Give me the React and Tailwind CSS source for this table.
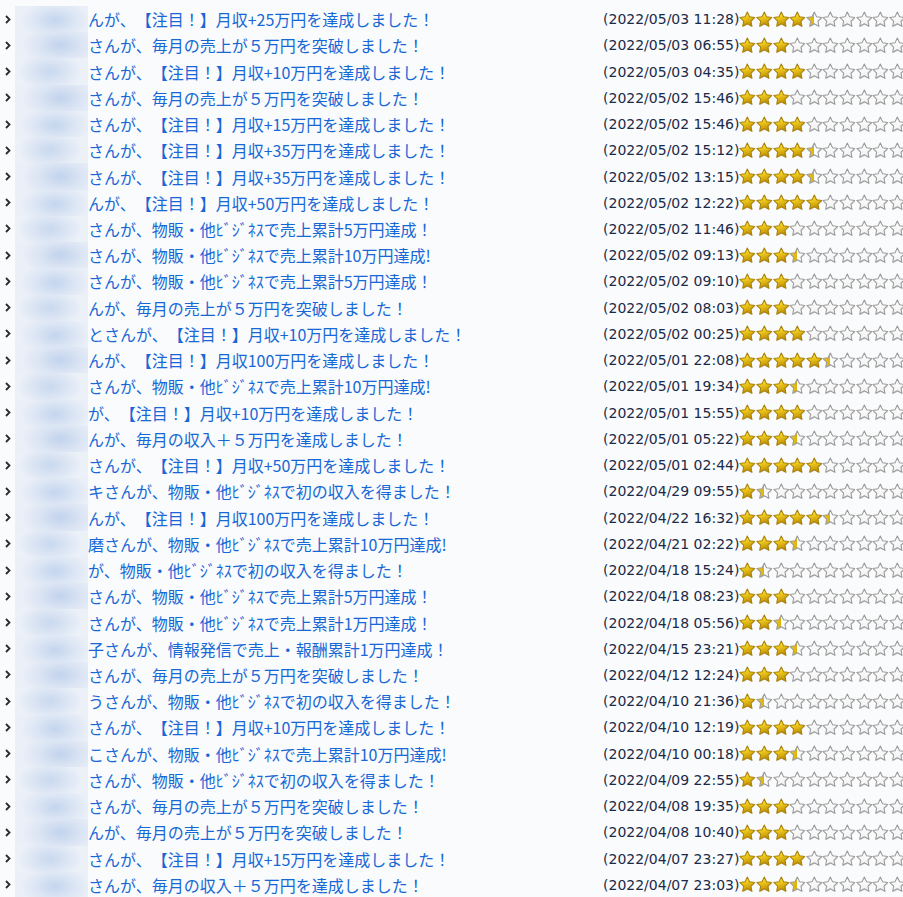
import React from 'react';

const rows = [
  ['a', 'んが、【注目！】月収+25万円を達成しました！', '2022/05/03 11:28', 4.5],
  ['b', 'さんが、毎月の売上が５万円を突破しました！', '2022/05/03 06:55', 3],
  ['c', 'さんが、【注目！】月収+10万円を達成しました！', '2022/05/03 04:35', 4],
  ['b', 'さんが、毎月の売上が５万円を突破しました！', '2022/05/02 15:46', 3],
  ['a', 'さんが、【注目！】月収+15万円を達成しました！', '2022/05/02 15:46', 4],
  ['c', 'さんが、【注目！】月収+35万円を達成しました！', '2022/05/02 15:12', 4.5],
  ['b', 'さんが、【注目！】月収+35万円を達成しました！', '2022/05/02 13:15', 4.5],
  ['a', 'んが、【注目！】月収+50万円を達成しました！', '2022/05/02 12:22', 5],
  ['c', 'さんが、物販・他ﾋﾞｼﾞﾈｽで売上累計5万円達成！', '2022/05/02 11:46', 3],
  ['b', 'さんが、物販・他ﾋﾞｼﾞﾈｽで売上累計10万円達成!', '2022/05/02 09:13', 3.5],
  ['a', 'さんが、物販・他ﾋﾞｼﾞﾈｽで売上累計5万円達成！', '2022/05/02 09:10', 3],
  ['c', 'んが、毎月の売上が５万円を突破しました！', '2022/05/02 08:03', 3],
  ['a', 'とさんが、【注目！】月収+10万円を達成しました！', '2022/05/02 00:25', 4],
  ['b', 'んが、【注目！】月収100万円を達成しました！', '2022/05/01 22:08', 5.5],
  ['c', 'さんが、物販・他ﾋﾞｼﾞﾈｽで売上累計10万円達成!', '2022/05/01 19:34', 3.5],
  ['a', 'が、【注目！】月収+10万円を達成しました！', '2022/05/01 15:55', 4],
  ['b', 'んが、毎月の収入＋５万円を達成しました！', '2022/05/01 05:22', 3.5],
  ['c', 'さんが、【注目！】月収+50万円を達成しました！', '2022/05/01 02:44', 5],
  ['a', 'キさんが、物販・他ﾋﾞｼﾞﾈｽで初の収入を得ました！', '2022/04/29 09:55', 1.5],
  ['b', 'んが、【注目！】月収100万円を達成しました！', '2022/04/22 16:32', 5.5],
  ['c', '磨さんが、物販・他ﾋﾞｼﾞﾈｽで売上累計10万円達成!', '2022/04/21 02:22', 3.5],
  ['a', 'が、物販・他ﾋﾞｼﾞﾈｽで初の収入を得ました！', '2022/04/18 15:24', 1.5],
  ['b', 'さんが、物販・他ﾋﾞｼﾞﾈｽで売上累計5万円達成！', '2022/04/18 08:23', 3],
  ['c', 'さんが、物販・他ﾋﾞｼﾞﾈｽで売上累計1万円達成！', '2022/04/18 05:56', 2.5],
  ['a', '子さんが、情報発信で売上・報酬累計1万円達成！', '2022/04/15 23:21', 3.5],
  ['b', 'さんが、毎月の売上が５万円を突破しました！', '2022/04/12 12:24', 3],
  ['c', 'うさんが、物販・他ﾋﾞｼﾞﾈｽで初の収入を得ました！', '2022/04/10 21:36', 1.5],
  ['a', 'さんが、【注目！】月収+10万円を達成しました！', '2022/04/10 12:19', 4],
  ['b', 'こさんが、物販・他ﾋﾞｼﾞﾈｽで売上累計10万円達成!', '2022/04/10 00:18', 3.5],
  ['c', 'さんが、物販・他ﾋﾞｼﾞﾈｽで初の収入を得ました！', '2022/04/09 22:55', 1.5],
  ['a', 'さんが、毎月の売上が５万円を突破しました！', '2022/04/08 19:35', 3],
  ['b', 'んが、毎月の売上が５万円を突破しました！', '2022/04/08 10:40', 3],
  ['c', 'さんが、【注目！】月収+15万円を達成しました！', '2022/04/07 23:27', 4],
  ['a', 'さんが、毎月の収入＋５万円を達成しました！', '2022/04/07 23:03', 3.5],
];

// blurred-out user names, drawn as soft blobs
const blur = {
  a: 'bg-[radial-gradient(ellipse_48%_80%_at_55%_55%,#c4d5ee_0%,#dbe5f4_55%,#ebf0f8_100%)]',
  b: 'bg-[radial-gradient(ellipse_52%_85%_at_62%_50%,#c2d3ed_0%,#dae4f3_55%,#eaeff8_100%)]',
  c: 'bg-[radial-gradient(ellipse_44%_75%_at_48%_50%,#c9d9ef_0%,#dde6f4_60%,#ecf1f8_100%)]',
};

// fat 5-point star, centre (8,8.6), outer r 7.6, inner r 3.7
const STAR = '8,1 10.17,5.61 15.23,6.25 11.52,9.74 12.47,14.75 8,12.3 3.53,14.75 4.48,9.74 0.77,6.25 5.83,5.61';

function Star({ kind }) {
  const fill = kind === 'full' ? 'url(#gold)' : kind === 'half' ? 'url(#halfgold)' : 'url(#blank)';
  const stroke = kind === 'full' ? '#a98108' : '#9a9a9a';
  return (
    <svg width="16.6" height="17" viewBox="0 0 16 16.4" className="shrink-0">
      <polygon points={STAR} transform="translate(0.6 0.9)" fill="#000" opacity="0.13" />
      <polygon points={STAR} fill={fill} stroke={stroke} strokeWidth="1" strokeLinejoin="round" />
    </svg>
  );
}

function Stars({ value }) {
  const stars = [];
  for (let i = 0; i < 10; i++) {
    let kind = 'empty';
    if (value >= i + 1) kind = 'full';
    else if (value > i) kind = 'half';
    stars.push(<Star key={i} kind={kind} />);
  }
  return <div className="flex">{stars}</div>;
}

export default function App() {
  return (
    <div className="min-h-screen w-[903px] overflow-hidden bg-[#fafbfc] pt-[6px]">
      <svg width="0" height="0" className="absolute">
        <defs>
          <linearGradient id="gold" x1="0" y1="0" x2="0.3" y2="1">
            <stop offset="0" stopColor="#fff7a0" />
            <stop offset="0.4" stopColor="#f3d020" />
            <stop offset="1" stopColor="#c09004" />
          </linearGradient>
          <linearGradient id="halfgold" x1="0" y1="0" x2="1" y2="0">
            <stop offset="0" stopColor="#f2cd1c" />
            <stop offset="0.5" stopColor="#dcb00a" />
            <stop offset="0.5" stopColor="#ffffff" />
            <stop offset="1" stopColor="#f4f4f4" />
          </linearGradient>
          <linearGradient id="blank" x1="0" y1="0" x2="0" y2="1">
            <stop offset="0" stopColor="#ffffff" />
            <stop offset="1" stopColor="#f1f1f1" />
          </linearGradient>
        </defs>
      </svg>
      {rows.map(([b, msg, date, rating], i) => (
        <div key={i} className="flex h-[26.24px] items-center">
          <div className="flex w-[15px] shrink-0 justify-center pl-[1px]">
            <svg width="6" height="9" viewBox="0 0 6 9">
              <path d="M1 1 L4.5 4.5 L1 8" fill="none" stroke="#2b2b2b" strokeWidth="1.8" />
            </svg>
          </div>
          <div className={'h-full w-[73px] shrink-0 ' + blur[b]} />
          <div className="w-[515px] shrink-0 whitespace-nowrap text-[16px] leading-none text-[#1768d6] [font-family:'Noto_Sans_CJK_JP',sans-serif] [text-spacing-trim:space-all]">
            {msg}
          </div>
          <div className="shrink-0 whitespace-nowrap text-[14px] leading-none text-[#1b2a48] [font-family:'DejaVu_Sans',sans-serif]">
            ({date})
          </div>
          <Stars value={rating} />
        </div>
      ))}
    </div>
  );
}
